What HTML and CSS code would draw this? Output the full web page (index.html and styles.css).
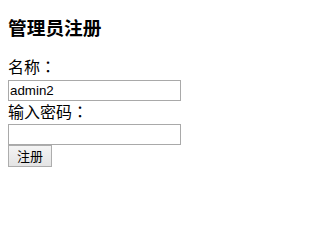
FILE: index.html
```html
<!DOCTYPE html>
<html lang="zh-CN">
<head>
<meta charset="utf-8">
<title>管理员注册</title>
<link rel="stylesheet" href="styles.css">
</head>
<body>
<h3 class="title">管理员注册</h3>
<form class="form">
  <label class="label" for="name">名称<span class="colon" lang="zh-Hant">：</span></label>
  <input class="field" id="name" type="text" value="admin2">
  <label class="label" for="pwd">输入密码<span class="colon" lang="zh-Hant">：</span></label>
  <input class="field" id="pwd" type="password">
  <button class="btn" type="button">注册</button>
</form>
</body>
</html>
```

FILE: styles.css
```css
html, body {
  background: #fff;
}
body {
  margin: 0;
  padding: 16px 8px 0;
  font-family: "Noto Sans CJK SC", sans-serif;
  color: #000;
}
.title {
  margin: 0 0 18px;
  font-size: 18.72px;
  line-height: 22px;
  height: 22px;
  font-weight: bold;
}
.form {
  display: flex;
  flex-direction: column;
  align-items: flex-start;
}
.label {
  font-size: 16px;
  line-height: 21px;
  height: 23px;
}
.colon {
  font-family: "Noto Sans CJK TC", sans-serif;
}
.field {
  box-sizing: border-box;
  width: 173px;
  height: 21px;
  margin: 0;
  padding: 1px 1px;
  border: 1px solid #a9a9a9;
  border-radius: 0;
  font-family: "Liberation Sans", Arial, sans-serif;
  font-size: 13.33px;
  color: #000;
  background: #fff;
  outline: none;
}
.field:first-of-type {
  margin-top: 1px;
}
.btn {
  box-sizing: border-box;
  height: 22px;
  margin: 0;
  padding: 0 8px;
  border: 1px solid #adadad;
  border-radius: 0;
  background: linear-gradient(#f4f4f4, #e4e4e4);
  font-family: "Noto Sans CJK SC", sans-serif;
  font-size: 13px;
  line-height: 18px;
  color: #000;
}
```
